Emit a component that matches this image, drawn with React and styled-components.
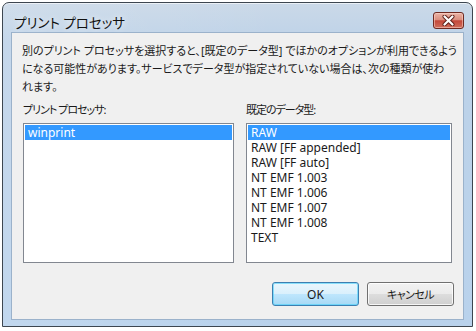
import React from 'react';
import styled, { createGlobalStyle } from 'styled-components';

const GlobalStyle = createGlobalStyle`
  html, body {
    margin: 0;
    background: #fff;
  }
  body {
    font-family: "Noto Sans", "Noto Sans CJK JP", sans-serif;
    font-size: 12px;
    color: #1a1a1a;
    font-feature-settings: "palt";
  }
`;

const Page = styled.div`
  padding: 2px 0 0 2px;
`;

const Window = styled.div`
  box-sizing: border-box;
  width: 471px;
  border: 1px solid #3d4650;
  border-radius: 7px 7px 0 0;
  padding: 0 8px 6px 8px;
  background: linear-gradient(90deg, rgba(255,255,255,0.12), rgba(255,255,255,0) 60%),
    linear-gradient(180deg, #cbd9e8 0%, #bdd2e8 12%, #b9d2ec 100%);
  box-shadow: inset 0 1px 0 rgba(255,255,255,0.6), 0 1px 0 #2d9fb3;
`;

const TitleBar = styled.div`
  height: 29px;
  display: flex;
  justify-content: space-between;
  align-items: flex-start;
  padding-left: 3px;
`;

const Title = styled.div`
  font-size: 13.5px;
  line-height: 16px;
  margin-top: 12px;
  color: #111;
  text-shadow: 0 0 6px rgba(255,255,255,0.9);
`;

const CloseButton = styled.div`
  box-sizing: border-box;
  width: 31px;
  height: 17px;
  margin-top: 9px;
  border: 1px solid #6e2a22;
  border-radius: 3px;
  display: flex;
  align-items: center;
  justify-content: center;
  background: linear-gradient(180deg, #eab3a6 0%, #db8f7f 45%, #c4483a 52%, #cf6e5c 100%);
  box-shadow: inset 0 0 0 1px rgba(255,220,210,0.5);
`;

const Client = styled.div`
  box-sizing: border-box;
  height: 288px;
  border: 1px solid #9bb2cb;
  background: #f0f0f0;
  padding: 9px 10px 0 11px;
  display: flex;
  flex-direction: column;
`;

const Description = styled.div`
  font-size: 11px;
  line-height: 18px;
  white-space: nowrap;
  margin-left: -1px;
`;

const Columns = styled.div`
  display: grid;
  grid-template-columns: 211px 206px;
  column-gap: 12px;
  margin-top: 6px;
`;

const Column = styled.div`
  display: flex;
  flex-direction: column;
`;

const Label = styled.div`
  font-size: 11px;
  letter-spacing: -1px;
  line-height: 16px;
  margin-bottom: 5px;
`;

const ListBox = styled.div`
  box-sizing: border-box;
  height: 140px;
  border: 1px solid #828790;
  background: #fff;
  padding: 1px;
`;

const ListItem = styled.div`
  height: 15px;
  line-height: 15px;
  padding-left: 3px;
  white-space: nowrap;
  overflow: hidden;
  background: ${p => (p.$selected ? '#3399ff' : 'transparent')};
  color: ${p => (p.$selected ? '#fff' : '#1a1a1a')};
`;

const ButtonRow = styled.div`
  display: flex;
  justify-content: flex-end;
  gap: 8px;
  margin-top: 19px;
  margin-right: -1px;
`;

const Button = styled.div`
  box-sizing: border-box;
  width: 87px;
  height: 24px;
  border-radius: 3px;
  display: flex;
  align-items: center;
  justify-content: center;
  font-size: ${p => (p.$primary ? '12px' : '11px')};
  letter-spacing: ${p => (p.$primary ? '0' : '-0.5px')};
  border: 1px solid ${p => (p.$primary ? '#3c7fb1' : '#707070')};
  background: ${p =>
    p.$primary
      ? 'linear-gradient(180deg, #eaf6fd 0%, #d9f0fc 50%, #bee6fd 51%, #a7d9f5 100%)'
      : 'linear-gradient(180deg, #f2f2f2 0%, #ebebeb 50%, #dddddd 51%, #cfcfcf 100%)'};
  box-shadow: inset 0 0 0 1px ${p => (p.$primary ? 'rgba(72,209,250,0.6)' : 'rgba(255,255,255,0.8)')};
`;

const processors = ['winprint'];
const dataTypes = [
  'RAW',
  'RAW [FF appended]',
  'RAW [FF auto]',
  'NT EMF 1.003',
  'NT EMF 1.006',
  'NT EMF 1.007',
  'NT EMF 1.008',
  'TEXT',
];

export default function App() {
  return (
    <Page>
      <GlobalStyle />
      <Window>
        <TitleBar>
          <Title>プリント プロセッサ</Title>
          <CloseButton>
            <svg width="13" height="11" viewBox="0 0 13 11">
              <path d="M2.5 1.5 L10.5 9.5 M10.5 1.5 L2.5 9.5" stroke="#5b1d16" strokeWidth="4" strokeLinecap="round" />
              <path d="M2.5 1.5 L10.5 9.5 M10.5 1.5 L2.5 9.5" stroke="#fff" strokeWidth="2.2" strokeLinecap="round" />
            </svg>
          </CloseButton>
        </TitleBar>
        <Client>
          <Description>
            別のプリント プロセッサを選択すると、[既定のデータ型] でほかのオプションが利用できるよう<br />
            になる可能性があります。サービスでデータ型が指定されていない場合は、次の種類が使わ<br />
            れます。
          </Description>
          <Columns>
            <Column>
              <Label>プリント プロセッサ:</Label>
              <ListBox>
                {processors.map((p, i) => (
                  <ListItem key={p} $selected={i === 0}>{p}</ListItem>
                ))}
              </ListBox>
            </Column>
            <Column>
              <Label>既定のデータ型:</Label>
              <ListBox>
                {dataTypes.map((t, i) => (
                  <ListItem key={t} $selected={i === 0}>{t}</ListItem>
                ))}
              </ListBox>
            </Column>
          </Columns>
          <ButtonRow>
            <Button $primary>OK</Button>
            <Button>キャンセル</Button>
          </ButtonRow>
        </Client>
      </Window>
    </Page>
  );
}
